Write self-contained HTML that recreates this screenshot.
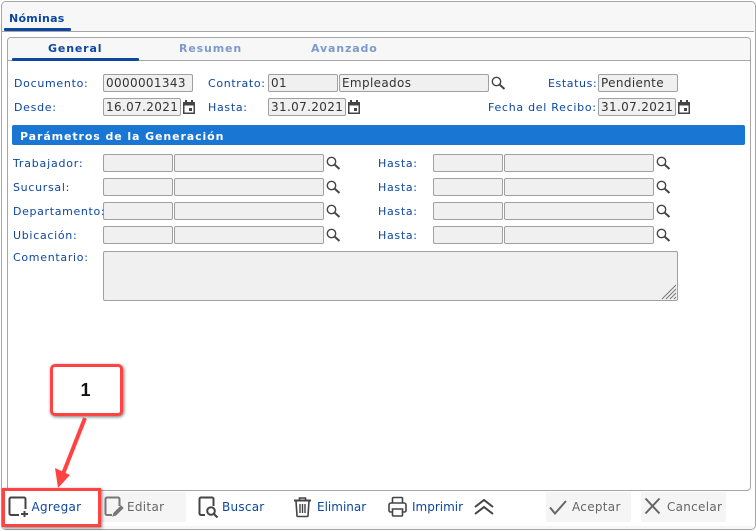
<!DOCTYPE html>
<html><head><meta charset="utf-8">
<style>
html,body{margin:0;padding:0;background:#fff}
#p{position:relative;width:756px;height:531px;overflow:hidden;background:#fff;font-family:"DejaVu Sans","Liberation Sans",sans-serif;font-size:11px}
#p div,#p svg{position:absolute;box-sizing:border-box}
.l{color:#0d47a1;letter-spacing:.7px;white-space:nowrap;line-height:14px;height:14px;margin-top:1px;z-index:2}
.i{background:#f0f0f0;border:1px solid #a0a0a0;border-radius:2px;height:18px;color:#333;font-size:12px;letter-spacing:.35px;line-height:16px;padding-left:2px;white-space:nowrap}
.b{font-size:12px;line-height:16px;white-space:nowrap;color:#0d47a1}
.g{color:#666}
</style></head><body><div id="p">
<div style="left:1px;top:1px;width:755px;height:529px;border:1px solid #a5a5a5;border-radius:5px;background:#fff"></div>
<div style="left:2px;top:2px;width:752px;height:30px;background:#f7f7f7;border-bottom:1px solid #a5a5a5;border-radius:4px 4px 0 0"></div>
<div style="left:2px;top:526px;width:752px;height:3px;background:#f7f7f7;border-radius:0 0 4px 4px"></div>
<div style="left:9px;top:12px;font-weight:bold;color:#0d47a1;font-size:11px;letter-spacing:.25px;line-height:14px">Nóminas</div>
<div style="left:4px;top:28px;width:67px;height:3px;background:#0d47a1;border-radius:1px"></div>

<div style="left:7px;top:37px;width:744px;height:454px;border:1px solid #a5a5a5;border-radius:4px;background:#fff"></div>
<div style="left:8px;top:38px;width:742px;height:23px;background:#f7f7f7;border-bottom:1px solid #a5a5a5;border-radius:3px 3px 0 0"></div>
<div style="left:48px;top:42px;font-weight:bold;color:#0d47a1;letter-spacing:.85px;line-height:14px">General</div>
<div style="left:179px;top:42px;font-weight:bold;color:#7c9acb;letter-spacing:.85px;line-height:14px">Resumen</div>
<div style="left:311px;top:42px;font-weight:bold;color:#7c9acb;letter-spacing:.85px;line-height:14px">Avanzado</div>
<div style="left:12px;top:58px;width:127px;height:3px;background:#0d47a1;border-radius:1px"></div>

<div class="l" style="left:14px;top:76px">Documento:</div>
<div class="i" style="left:103px;top:74px;width:90px">0000001343</div>
<div class="l" style="left:208px;top:76px;letter-spacing:.65px">Contrato:</div>
<div class="i" style="left:268px;top:74px;width:70px">01</div>
<div class="i" style="left:339px;top:74px;width:150px">Empleados</div>
<svg style="left:490px;top:75px" width="16" height="16" viewBox="0 0 16 16" fill="none" stroke="#444"><circle cx="6.500" cy="6.500" r="4.200" stroke-width="1.400"/><path d="M9.600 9.600L14.500 14" stroke-width="2"/></svg>
<div class="l" style="left:548px;top:76px;letter-spacing:.6px">Estatus:</div>
<div class="i" style="left:598px;top:74px;width:80px">Pendiente</div>

<div class="l" style="left:14px;top:100px">Desde:</div>
<div class="i" style="left:103px;top:98px;width:78px">16.07.2021</div>
<svg style="left:182px;top:99px" width="14" height="16" viewBox="0 0 14 16" fill="#444"><path fill-rule="evenodd" d="M3 1h2v2h4V1h2v2h1.500A.5.500 0 0 1 13 3.500V15H1V3.500A.5.500 0 0 1 1.500 3H3zM2.500 6.500V13.500h9V6.500z"/><rect x="7" y="9" width="3" height="3"/></svg>
<div class="l" style="left:208px;top:100px">Hasta:</div>
<div class="i" style="left:268px;top:98px;width:78px">31.07.2021</div>
<svg style="left:347px;top:99px" width="14" height="16" viewBox="0 0 14 16" fill="#444"><path fill-rule="evenodd" d="M3 1h2v2h4V1h2v2h1.500A.5.500 0 0 1 13 3.500V15H1V3.500A.5.500 0 0 1 1.500 3H3zM2.500 6.500V13.500h9V6.500z"/><rect x="7" y="9" width="3" height="3"/></svg>
<div class="l" style="left:488px;top:100px;letter-spacing:.72px">Fecha del Recibo:</div>
<div class="i" style="left:598px;top:98px;width:78px">31.07.2021</div>
<svg style="left:677px;top:99px" width="14" height="16" viewBox="0 0 14 16" fill="#444"><path fill-rule="evenodd" d="M3 1h2v2h4V1h2v2h1.500A.5.500 0 0 1 13 3.500V15H1V3.500A.5.500 0 0 1 1.500 3H3zM2.500 6.500V13.500h9V6.500z"/><rect x="7" y="9" width="3" height="3"/></svg>

<div style="left:12px;top:125px;width:733px;height:20px;background:#1976d2;border-radius:2px;color:#fff;font-weight:bold;font-size:11px;letter-spacing:.9px;line-height:23px;padding-left:8px">Parámetros de la Generación</div>

<div class="l" style="left:13px;top:156px;letter-spacing:.8px">Trabajador:</div>
<div class="i" style="left:103px;top:154px;width:70px"></div>
<div class="i" style="left:174px;top:154px;width:150px"></div>
<svg style="left:325px;top:155px" width="16" height="16" viewBox="0 0 16 16" fill="none" stroke="#444"><circle cx="6.500" cy="6.500" r="4.200" stroke-width="1.400"/><path d="M9.600 9.600L14.500 14" stroke-width="2"/></svg>
<div class="l" style="left:378px;top:156px">Hasta:</div>
<div class="i" style="left:433px;top:154px;width:70px"></div>
<div class="i" style="left:504px;top:154px;width:150px"></div>
<svg style="left:655px;top:155px" width="16" height="16" viewBox="0 0 16 16" fill="none" stroke="#444"><circle cx="6.500" cy="6.500" r="4.200" stroke-width="1.400"/><path d="M9.600 9.600L14.500 14" stroke-width="2"/></svg>

<div class="l" style="left:13px;top:180px">Sucursal:</div>
<div class="i" style="left:103px;top:178px;width:70px"></div>
<div class="i" style="left:174px;top:178px;width:150px"></div>
<svg style="left:325px;top:179px" width="16" height="16" viewBox="0 0 16 16" fill="none" stroke="#444"><circle cx="6.500" cy="6.500" r="4.200" stroke-width="1.400"/><path d="M9.600 9.600L14.500 14" stroke-width="2"/></svg>
<div class="l" style="left:378px;top:180px">Hasta:</div>
<div class="i" style="left:433px;top:178px;width:70px"></div>
<div class="i" style="left:504px;top:178px;width:150px"></div>
<svg style="left:655px;top:179px" width="16" height="16" viewBox="0 0 16 16" fill="none" stroke="#444"><circle cx="6.500" cy="6.500" r="4.200" stroke-width="1.400"/><path d="M9.600 9.600L14.500 14" stroke-width="2"/></svg>

<div class="i" style="left:103px;top:202px;width:70px"></div>
<div class="l" style="left:13px;top:204px;letter-spacing:.65px">Departamento:</div>
<div class="i" style="left:174px;top:202px;width:150px"></div>
<svg style="left:325px;top:203px" width="16" height="16" viewBox="0 0 16 16" fill="none" stroke="#444"><circle cx="6.500" cy="6.500" r="4.200" stroke-width="1.400"/><path d="M9.600 9.600L14.500 14" stroke-width="2"/></svg>
<div class="l" style="left:378px;top:204px">Hasta:</div>
<div class="i" style="left:433px;top:202px;width:70px"></div>
<div class="i" style="left:504px;top:202px;width:150px"></div>
<svg style="left:655px;top:203px" width="16" height="16" viewBox="0 0 16 16" fill="none" stroke="#444"><circle cx="6.500" cy="6.500" r="4.200" stroke-width="1.400"/><path d="M9.600 9.600L14.500 14" stroke-width="2"/></svg>

<div class="l" style="left:13px;top:228px">Ubicación:</div>
<div class="i" style="left:103px;top:226px;width:70px"></div>
<div class="i" style="left:174px;top:226px;width:150px"></div>
<svg style="left:325px;top:227px" width="16" height="16" viewBox="0 0 16 16" fill="none" stroke="#444"><circle cx="6.500" cy="6.500" r="4.200" stroke-width="1.400"/><path d="M9.600 9.600L14.500 14" stroke-width="2"/></svg>
<div class="l" style="left:378px;top:228px">Hasta:</div>
<div class="i" style="left:433px;top:226px;width:70px"></div>
<div class="i" style="left:504px;top:226px;width:150px"></div>
<svg style="left:655px;top:227px" width="16" height="16" viewBox="0 0 16 16" fill="none" stroke="#444"><circle cx="6.500" cy="6.500" r="4.200" stroke-width="1.400"/><path d="M9.600 9.600L14.500 14" stroke-width="2"/></svg>

<div class="l" style="left:13px;top:250px">Comentario:</div>
<div class="i" style="left:103px;top:251px;width:575px;height:50px"></div>
<svg style="left:661px;top:284px" width="16" height="16" viewBox="0 0 16 16" stroke="#777" stroke-width="1" fill="none"><path d="M1 15L15 1M5 15L15 5M9 15L15 9M13 15L15 13"/></svg>

<!-- toolbar -->
<div style="left:101px;top:492px;width:85px;height:30px;background:#f5f5f5;border-radius:2px"></div>
<div style="left:546px;top:492px;width:85px;height:30px;background:#f5f5f5;border-radius:2px"></div>
<div style="left:641px;top:492px;width:85px;height:30px;background:#f5f5f5;border-radius:2px"></div>

<svg style="left:8px;top:496px" width="22" height="22" viewBox="0 0 22 22" fill="none" stroke="#444" stroke-width="2"><path d="M11 19H3a1.500 1.500 0 0 1-1.500-1.500V3A1.500 1.500 0 0 1 3 1.500h13A1.500 1.500 0 0 1 17.500 3v10"/><path d="M16.500 15v6M13 18h7"/></svg>
<div class="b" style="left:31.500px;top:499px;letter-spacing:.3px">Agregar</div>

<svg style="left:103px;top:496px" width="22" height="22" viewBox="0 0 22 22" fill="none" stroke="#777" stroke-width="2"><path d="M9 19H4a1.500 1.500 0 0 1-1.500-1.500V3A1.500 1.500 0 0 1 4 1.500h11A1.500 1.500 0 0 1 16.500 3v7"/><path d="M10 20l1-3 7-7 2 2-7 7z" fill="#777" stroke-width="1"/></svg>
<div class="b g" style="left:127px;top:499px;letter-spacing:.3px">Editar</div>

<svg style="left:198px;top:496px" width="22" height="22" viewBox="0 0 22 22" fill="none" stroke="#444" stroke-width="2"><path d="M7 19H3a1.500 1.500 0 0 1-1.500-1.500V3A1.500 1.500 0 0 1 3 1.500h11A1.500 1.500 0 0 1 15.500 3v7"/><circle cx="13" cy="15" r="3.800"/><path d="M16 18l3.500 3.500" stroke-width="2.200"/></svg>
<div class="b" style="left:222px;top:499px;letter-spacing:.25px">Buscar</div>

<svg style="left:293px;top:496px" width="20" height="22" viewBox="0 0 20 22" fill="none" stroke="#444" stroke-width="1.600"><path d="M1 4.500h17" stroke-width="2"/><path d="M6.500 4V2h6v2"/><path d="M3 5l1 14.500a1 1 0 0 0 1 1h9a1 1 0 0 0 1-1L16 5"/><path d="M7 8v9M9.500 8v9M12 8v9" stroke-width="1.400"/></svg>
<div class="b" style="left:317px;top:499px">Eliminar</div>

<svg style="left:388px;top:496px" width="20" height="22" viewBox="0 0 20 22" fill="none" stroke="#444" stroke-width="1.600"><path d="M4.500 7V2.500a1 1 0 0 1 1-1h8a1 1 0 0 1 1 1V7"/><path d="M4 16H2.500a1.500 1.500 0 0 1-1.500-1.500V9a2 2 0 0 1 2-2h13a2 2 0 0 1 2 2v5.500a1.500 1.500 0 0 1-1.500 1.500H15"/><path d="M4.500 13h10v6a1 1 0 0 1-1 1h-8a1 1 0 0 1-1-1z" fill="#fff"/></svg>
<div class="b" style="left:412px;top:499px">Imprimir</div>

<svg style="left:474px;top:498px" width="20" height="18" viewBox="0 0 20 18" fill="none" stroke="#444" stroke-width="2"><path d="M1 9l9-7 9 7M1 16l9-7 9 7"/></svg>

<svg style="left:548px;top:497px" width="20" height="20" viewBox="0 0 20 20" fill="none" stroke="#666" stroke-width="2"><path d="M2 10.500l5 6L18 4"/></svg>
<div class="b g" style="left:572px;top:499px;letter-spacing:.3px">Aceptar</div>

<svg style="left:644px;top:497px" width="18" height="18" viewBox="0 0 18 18" fill="none" stroke="#666" stroke-width="2"><path d="M1.500 1.500l14 15M15.500 1.500l-14 15"/></svg>
<div class="b g" style="left:667px;top:499px;letter-spacing:.28px">Cancelar</div>

<!-- annotation -->
<div style="left:2px;top:488px;width:99px;height:39px;border:3px solid #ff4343;box-shadow:1px 1px 3px rgba(0,0,0,.5);z-index:3"></div>
<div style="left:50px;top:364px;width:73px;height:52px;border:3px solid #ff4343;border-radius:5px;background:#fff;box-shadow:1px 1px 3px rgba(0,0,0,.55);text-align:center;font:bold 18px/47px 'Liberation Sans',sans-serif;color:#111;z-index:3"><span style="position:relative;left:-1px">1</span></div>
<svg style="left:50px;top:414px;z-index:3" width="45" height="76" viewBox="0 0 45 76"><path d="M35 4L13 60" stroke="#ff4343" stroke-width="4" fill="none"/><path d="M5 54L20 61L8 74z" fill="#ff4343"/></svg>
</div></body></html>
